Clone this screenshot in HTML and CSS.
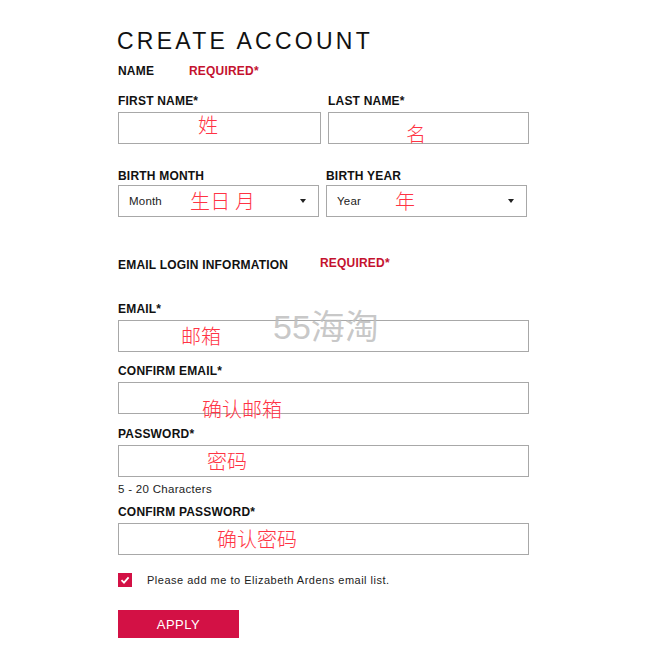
FILE: index.html
```html
<!DOCTYPE html>
<html lang="en">
<head>
    <meta charset="UTF-8">
    <title>Create Account</title>
    <link rel="stylesheet" href="styles.css">
</head>
<body>
<div class="page">
    <h1 class="title">CREATE ACCOUNT</h1>

    <div class="section section-name-row">
        <span class="section-name">NAME</span>
        <span class="req">REQUIRED*</span>
    </div>

    <div class="row row-name">
        <div class="field">
            <label>FIRST NAME*</label>
            <div class="box"><span class="note note-first">姓</span></div>
        </div>
        <div class="field">
            <label>LAST NAME*</label>
            <div class="box"><span class="note note-last">名</span></div>
        </div>
    </div>

    <div class="row row-birth">
        <div class="field">
            <label>BIRTH MONTH</label>
            <div class="box select">
                <span>Month</span><span class="arrow"></span>
                <span class="note note-month">生日&nbsp;月</span>
            </div>
        </div>
        <div class="field">
            <label>BIRTH YEAR</label>
            <div class="box select">
                <span>Year</span><span class="arrow"></span>
                <span class="note note-year">年</span>
            </div>
        </div>
    </div>

    <div class="section section-email">
        <span class="section-name wide">EMAIL LOGIN INFORMATION</span>
        <span class="req">REQUIRED*</span>
    </div>

    <div class="field f-email">
        <label>EMAIL*</label>
        <div class="box">
            <span class="note note-email">邮箱</span>
            <span class="watermark">55海淘</span>
        </div>
    </div>

    <div class="field f-confirm-email">
        <label>CONFIRM EMAIL*</label>
        <div class="box"><span class="note note-cemail">确认邮箱</span></div>
    </div>

    <div class="field f-password">
        <label>PASSWORD*</label>
        <div class="box"><span class="note note-pass">密码</span></div>
    </div>
    <p class="hint">5 - 20 Characters</p>

    <div class="field f-confirm-pass">
        <label>CONFIRM PASSWORD*</label>
        <div class="box"><span class="note note-cpass">确认密码</span></div>
    </div>

    <div class="check-row">
        <span class="check">
            <svg width="10" height="10" viewBox="0 0 10 10"><path d="M1.5 5.2 L4 7.6 L8.6 2.4" fill="none" stroke="#fff" stroke-width="1.8"/></svg>
        </span>
        <span class="check-text">Please add me to Elizabeth Ardens email list.</span>
    </div>

    <button class="apply">APPLY</button>
</div>
</body>
</html>
```

FILE: styles.css
```css
*{
    box-sizing: border-box;
}
body{
    margin:0;
    background:#fff;
    color:#111;
    font-family:"Liberation Sans",Arial,sans-serif;
}
.page{
    width:411px;
    margin-left:118px;
    padding-top:28px;
}
.title{
    margin:0;
    margin-left:-1px;
    font-size:23px;
    font-weight:normal;
    line-height:26px;
    letter-spacing:3.25px;
    color:#111;
}
.section{
    display:flex;
    font-size:12px;
    font-weight:bold;
    line-height:14px;
    letter-spacing:0.2px;
}
.section-name-row{
    margin-top:10px;
}
.section-name{
    width:71px;
}
.section-name.wide{
    width:202px;
}
.req{
    color:#c4122f;
}
.section-email{
    margin-top:41px;
}
.section-email .req{
    margin-top:-2px;
}
.row{
    display:grid;
    column-gap:7px;
}
.row-name{
    margin-top:16px;
    grid-template-columns:203px 201px;
}
.row-birth{
    margin-top:25px;
    grid-template-columns:201px 201px;
}
.field label{
    display:block;
    font-size:12px;
    font-weight:bold;
    line-height:14px;
    letter-spacing:0.2px;
    margin-bottom:4px;
}
.row-birth .field label{
    margin-bottom:2px;
}
.box{
    position:relative;
    height:32px;
    border:1px solid #a8a8a8;
    background:#fff;
}
.select{
    display:flex;
    align-items:center;
    justify-content:space-between;
    padding:0 12px 0 10px;
    font-size:11.5px;
    letter-spacing:0.2px;
    color:#222;
}
.arrow{
    width:0;
    height:0;
    border-left:3.5px solid transparent;
    border-right:3.5px solid transparent;
    border-top:4px solid #222;
}
.note{
    position:absolute;
    font-family:"Noto Sans CJK SC",sans-serif;
    font-size:20px;
    font-weight:300;
    line-height:20px;
    color:#ff3344;
    white-space:nowrap;
}
.note-first{ left:79px; top:2px; }
.note-last{ left:77px; top:11px; }
.note-month{ left:71px; top:5px; }
.note-year{ left:68px; top:5px; }
.note-email{ left:62px; top:5px; }
.note-cemail{ left:83px; top:16px; }
.note-pass{ left:88px; top:5px; }
.note-cpass{ left:98px; top:5px; }
.watermark{
    position:absolute;
    left:154px;
    top:-11px;
    font-family:"Liberation Sans","Noto Sans CJK SC",sans-serif;
    font-size:34px;
    line-height:34px;
    font-weight:normal;
    color:rgba(190,190,190,0.85);
    white-space:nowrap;
}
.f-email{
    margin-top:30px;
}
.f-confirm-email{
    margin-top:12px;
}
.f-password{
    margin-top:13px;
}
.hint{
    margin:5px 0 0;
    font-size:11.5px;
    line-height:14px;
    letter-spacing:0.3px;
    color:#222;
}
.f-confirm-pass{
    margin-top:9px;
}
.check-row{
    margin-top:18px;
    display:flex;
    align-items:center;
    height:14px;
}
.check{
    width:14px;
    height:14px;
    background:#d31145;
    display:flex;
    align-items:center;
    justify-content:center;
}
.check-text{
    margin-left:15px;
    font-size:11px;
    letter-spacing:0.5px;
    color:#222;
}
.apply{
    display:block;
    margin-top:23px;
    width:121px;
    height:28px;
    border:none;
    background:#d31145;
    color:#fff;
    font-family:"Liberation Sans",Arial,sans-serif;
    font-size:13px;
    letter-spacing:0.5px;
    padding:0;
}
```
